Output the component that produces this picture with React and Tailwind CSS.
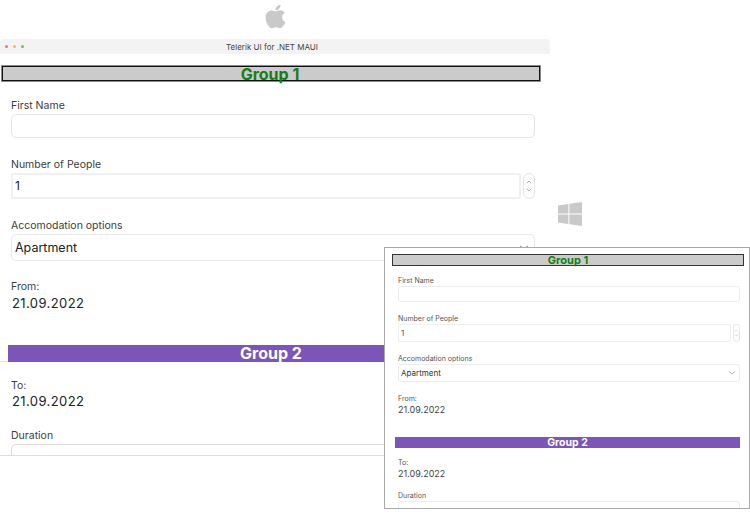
import { ChevronDown, ChevronUp } from 'lucide-react';
import { FaApple } from 'react-icons/fa';

const WindowsLogo = () => (
  <svg className="absolute left-[558px] top-[202px] h-[24px] w-[24px]" viewBox="0 0 24 24" fill="#c9c9c9">
    <polygon points="0,3.4 10.4,1.9 10.4,11.5 0,11.5" />
    <polygon points="11.4,1.8 24,0 24,11.5 11.4,11.5" />
    <polygon points="0,12.5 10.4,12.5 10.4,22.1 0,20.6" />
    <polygon points="11.4,12.5 24,12.5 24,24 11.4,22.2" />
  </svg>
);

const MacWindow = () => (
  <div className="absolute left-0 top-[39px] flex h-[417px] w-[550px] flex-col overflow-hidden border-b border-[#dedede] font-['Inter',sans-serif] text-[#3c3c3c]">
    {/* Title bar */}
    <div className="relative flex h-[15px] shrink-0 items-center justify-center rounded-t-sm bg-[#f3f3f3] pr-[6px] text-[8px] text-[#444]">
      <div className="absolute left-[5px] flex gap-[5px]">
        <span className="h-[3px] w-[3px] rounded-full bg-[#f0736b]"></span>
        <span className="h-[3px] w-[3px] rounded-full bg-[#f5bd4f]"></span>
        <span className="h-[3px] w-[3px] rounded-full bg-[#62c554]"></span>
      </div>
      <span>Telerik UI for .NET MAUI</span>
    </div>

    <div className="ml-px mt-[11px] flex h-[17px] w-[540px] shrink-0 items-center justify-center border border-[#8a8a8a] bg-[#cbcbcb] pr-[2px] text-[16px] font-bold leading-none text-[#177d17] shadow-[inset_0_0_0_1px_#111]">
      Group 1
    </div>

    <div className="ml-[11px] mt-[16px] h-[14px] text-[10.5px] leading-[16px]">First Name</div>
    <div className="ml-[11px] mt-[2px] h-[24px] w-[524px] shrink-0 rounded-[5px] border border-[#e6e6e6]"></div>

    <div className="ml-[11px] mt-[19px] h-[14px] text-[10.5px] leading-[16px]">Number of People</div>
    <div className="ml-[11px] mt-[2px] flex h-[26px] w-[524px] shrink-0 gap-[2px]">
      <div className="flex flex-1 items-center rounded-[2px] border-2 border-[#f0f0f0] pl-[2px] text-[12px] text-[#222]">1</div>
      <div className="flex w-[12px] flex-col items-center justify-center rounded-[6px] border border-[#e4e4e4] text-[#888]">
        <ChevronUp size={8} />
        <ChevronDown size={8} />
      </div>
    </div>

    <div className="ml-[11px] mt-[19px] h-[14px] text-[10.5px] leading-[16px]">Accomodation options</div>
    <div className="ml-[11px] mt-[2px] flex h-[27px] w-[524px] shrink-0 items-center justify-between rounded-[5px] border border-[#e8e8e8] px-[3px] pt-px text-[12.5px] text-[#222]">
      Apartment
      <ChevronDown size={14} className="text-[#999]" />
    </div>

    <div className="ml-[11px] mt-[18px] h-[14px] text-[10.5px] leading-[16px]">From:</div>
    <div className="ml-[12px] mt-[1px] h-[18px] text-[13px] leading-[18px] tracking-[0.4px] text-[#222]">21.09.2022</div>

    <div className="mt-[33px] h-[17px] shrink-0 border-b border-[#e4e4e4] pl-[8px]">
      <div className="flex h-[17px] w-[526px] items-center justify-center bg-[#7b55b9] pb-[2px] text-[16px] font-bold leading-none text-white">
        Group 2
      </div>
    </div>

    <div className="ml-[11px] mt-[16px] h-[14px] text-[10.5px] leading-[16px]">To:</div>
    <div className="ml-[12px] h-[18px] text-[13px] leading-[18px] tracking-[0.4px] text-[#222]">21.09.2022</div>

    <div className="ml-[11px] mt-[18px] h-[14px] text-[10.5px] leading-[16px]">Duration</div>
    <div className="ml-[11px] mt-[2px] h-[24px] w-[524px] shrink-0 rounded-[5px] border border-[#dcdcdc]"></div>
  </div>
);

const WindowsWindow = () => (
  <div className="absolute left-[384px] top-[247px] flex h-[262px] w-[366px] flex-col overflow-hidden border border-[#a9a9a9] bg-white font-['Inter',sans-serif] text-[#555]">
    <div className="ml-[7px] mt-[6px] flex h-[12px] w-[352px] shrink-0 items-center justify-center border border-[#333] bg-[#cbcbcb] text-[11px] font-bold leading-none text-[#177d17]">
      Group 1
    </div>

    <div className="ml-[13px] mt-[10px] h-[10px] text-[7px] leading-[10px]">First Name</div>
    <div className="ml-[13px] h-[16px] w-[342px] shrink-0 rounded-[3px] border border-[#ececec]"></div>

    <div className="ml-[13px] mt-[12px] h-[10px] text-[7px] leading-[10px]">Number of People</div>
    <div className="ml-[13px] flex h-[18px] w-[342px] shrink-0 gap-[2px]">
      <div className="flex flex-1 items-center rounded-[2px] border border-[#eeeeee] pl-[2px] text-[8px]">1</div>
      <div className="flex w-[7px] flex-col items-center justify-center rounded-[3px] border border-[#e6e6e6] text-[#999]">
        <ChevronUp size={5} />
        <ChevronDown size={5} />
      </div>
    </div>

    <div className="ml-[13px] mt-[12px] h-[10px] text-[7px] leading-[10px]">Accomodation options</div>
    <div className="ml-[13px] flex h-[18px] w-[342px] shrink-0 items-center justify-between rounded-[3px] border border-[#ececec] px-[2px] text-[8px] text-[#333]">
      Apartment
      <ChevronDown size={10} className="text-[#999]" />
    </div>

    <div className="ml-[13px] mt-[12px] h-[10px] text-[7px] leading-[10px]">From:</div>
    <div className="ml-[13px] h-[12px] text-[9px] leading-[12px] text-[#444]">21.09.2022</div>

    <div className="ml-[10px] mt-[21px] flex h-[11px] w-[345px] shrink-0 items-center justify-center bg-[#7b55b9] pt-px text-[10.5px] font-bold leading-none text-white">
      Group 2
    </div>

    <div className="ml-[13px] mt-[10px] h-[10px] text-[7px] leading-[10px]">To:</div>
    <div className="ml-[13px] h-[12px] text-[9px] leading-[12px] text-[#444]">21.09.2022</div>

    <div className="ml-[13px] mt-[11px] h-[10px] text-[7px] leading-[10px]">Duration</div>
    <div className="ml-[13px] h-[16px] w-[342px] shrink-0 rounded-[3px] border border-[#ececec]"></div>
  </div>
);

export default function App() {
  return (
    <div className="relative h-[532px] w-[750px] overflow-hidden bg-white">
      <FaApple className="absolute left-[262px] top-[3px] text-[#c9c9c9]" size={27} />
      <WindowsLogo />
      <MacWindow />
      <WindowsWindow />
    </div>
  );
}
